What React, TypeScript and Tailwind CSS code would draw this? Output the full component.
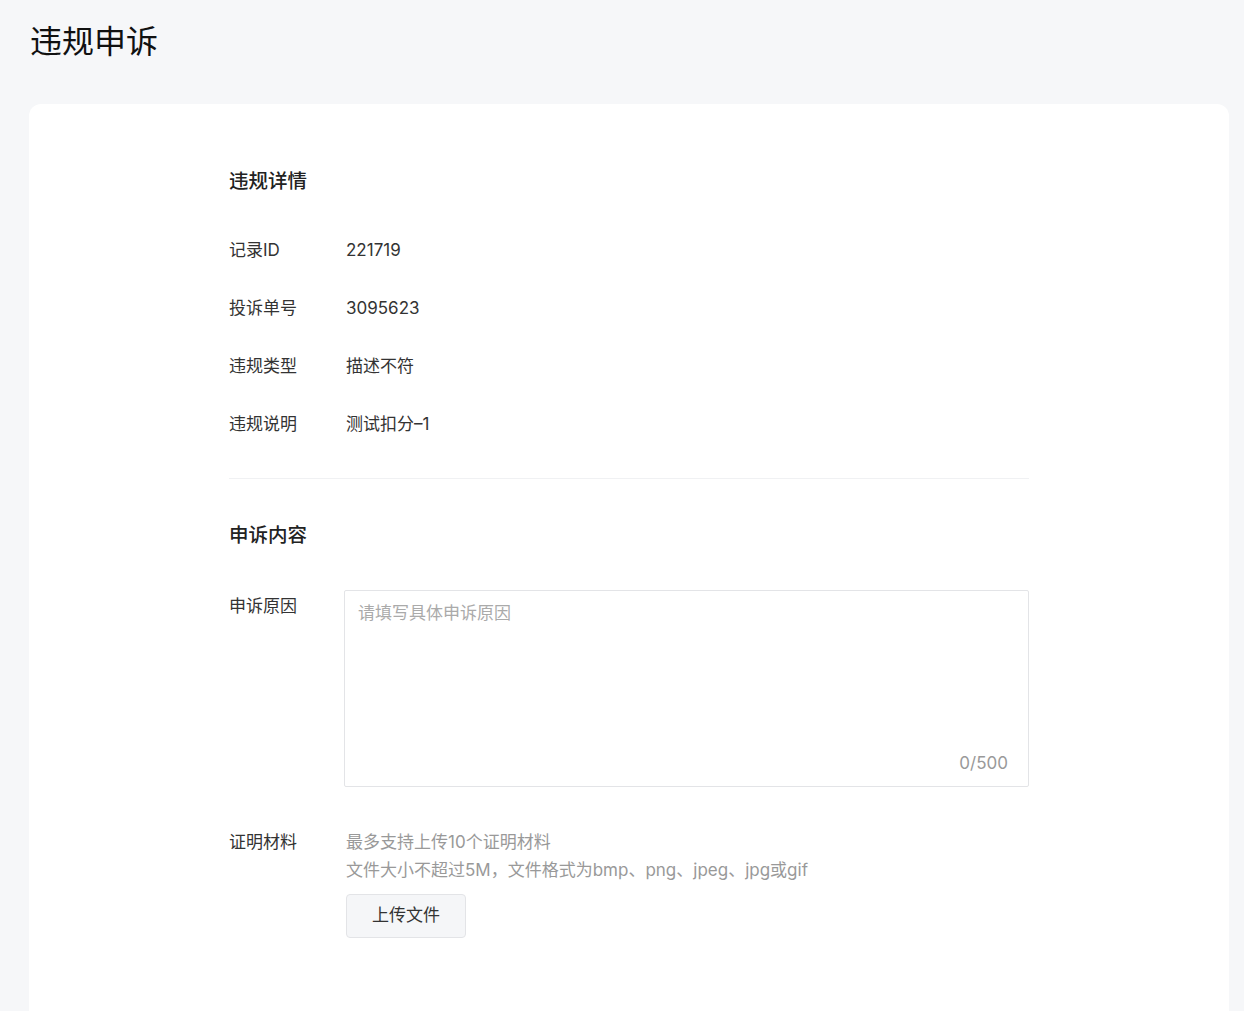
import React, { useState } from 'react';

const details = [
  { label: '记录ID', value: '221719' },
  { label: '投诉单号', value: '3095623' },
  { label: '违规类型', value: '描述不符' },
  { label: '违规说明', value: '测试扣分–1' },
];

export default function App() {
  const [reason, setReason] = useState('');

  return (
    <div
      className="min-h-screen bg-[#f6f7f9] px-[29px] text-[#333]"
      style={{ fontFamily: 'Inter, "Noto Sans CJK SC", sans-serif' }}
    >
      <h1 className="pt-[20px] pl-px text-[32px] leading-[44px] font-normal text-[#111]">违规申诉</h1>

      <div className="mt-[40px] w-[1200px] rounded-[12px] bg-white pt-[63px] pb-[90px] pl-[200px]">
        <div className="w-[800px]">
          {/* 违规详情 */}
          <h2 className="text-[19.5px] leading-[28px] font-medium text-[#222]">违规详情</h2>
          <div className="mt-[27px] flex flex-col">
            {details.map((d) => (
              <div key={d.label} className="flex h-[58px] items-center text-[17px]">
                <span className="w-[117px] text-[#333]">{d.label}</span>
                <span className="text-[#333]">{d.value}</span>
              </div>
            ))}
          </div>

          <div className="mt-[24px] h-px bg-[#f0f1f3]" />

          {/* 申诉内容 */}
          <h2 className="mt-[42px] text-[19.5px] leading-[28px] font-medium text-[#222]">申诉内容</h2>

          <div className="mt-[41px] flex">
            <span className="w-[115px] shrink-0 pt-[2px] text-[17px] leading-[28px] text-[#333]">申诉原因</span>
            <div className="relative h-[197px] flex-1 rounded-[2px] border border-[#e3e4e7] bg-white">
              <textarea
                value={reason}
                maxLength={500}
                onChange={(e) => setReason(e.target.value)}
                placeholder="请填写具体申诉原因"
                className="h-full w-full resize-none bg-transparent px-[13px] pt-[8px] text-[17px] leading-[28px] text-[#333] outline-none placeholder:text-[#aaa]"
              />
              <span className="absolute right-[20px] bottom-[11px] text-[17px] leading-[24px] text-[#999]">
                {reason.length}/500
              </span>
            </div>
          </div>

          <div className="mt-[41px] flex">
            <span className="w-[117px] shrink-0 text-[17px] leading-[28px] text-[#333]">证明材料</span>
            <div className="flex flex-col">
              <p className="text-[17px] leading-[28px] text-[#999]">最多支持上传10个证明材料</p>
              <p className="text-[17px] leading-[28px] text-[#999]">文件大小不超过5M，文件格式为bmp、png、jpeg、jpg或gif</p>
              <button className="mt-[10px] h-[44px] w-[120px] rounded-[4px] border border-[#e3e4e7] bg-[#f5f6f8] text-[17px] text-[#333]">
                上传文件
              </button>
            </div>
          </div>
        </div>
      </div>
    </div>
  );
}
